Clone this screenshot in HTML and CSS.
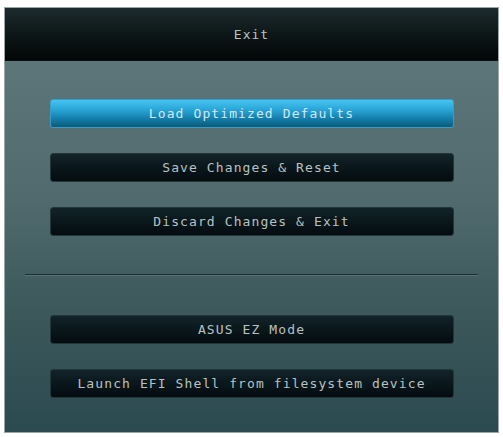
FILE: index.html
```html
<!DOCTYPE html>
<html>
<head>
<meta charset="utf-8">
<link rel="stylesheet" href="styles.css">
</head>
<body>
<div class="panel">
  <div class="header">Exit</div>
  <div class="content">
    <div class="group">
      <div class="btn active">Load Optimized Defaults</div>
      <div class="btn">Save Changes &amp; Reset</div>
      <div class="btn">Discard Changes &amp; Exit</div>
    </div>
    <div class="divider"></div>
    <div class="group">
      <div class="btn">ASUS EZ Mode</div>
      <div class="btn">Launch EFI Shell from filesystem device</div>
    </div>
  </div>
</div>
</body>
</html>
```
FILE: styles.css
```css
html, body {
  margin: 0;
  padding: 0;
  background: #ffffff;
}
body {
  padding: 7px 4px 0 4px;
  font-family: "DejaVu Sans Mono", "Liberation Mono", monospace;
}
.panel {
  width: 495px;
  height: 426px;
  box-sizing: border-box;
  border: 1px solid #9aa6a8;
  background: linear-gradient(180deg, #627a7c 0%, #506a6e 45%, #3a5659 75%, #2b4a50 100%);
  display: flex;
  flex-direction: column;
}
.header {
  height: 52px;
  flex: none;
  background: linear-gradient(180deg, #1c2b2d 0%, #0c1516 55%, #030606 100%);
  color: #b9c2c2;
  font-size: 13px;
  letter-spacing: 1px;
  display: flex;
  align-items: center;
  justify-content: center;
  border-bottom: 1px solid #0a0f10;
}
.content {
  padding: 38px 0 0 0;
  display: flex;
  flex-direction: column;
  align-items: center;
}
.group {
  display: flex;
  flex-direction: column;
  gap: 25px;
  width: 404px;
}
.btn {
  height: 29px;
  box-sizing: border-box;
  border-radius: 3px;
  background: linear-gradient(180deg, #122429 0%, #0a171b 50%, #040c10 100%);
  border: 1px solid #23373b;
  color: #b8c2c4;
  font-size: 13px;
  letter-spacing: 1.1px;
  display: flex;
  align-items: center;
  justify-content: center;
  white-space: nowrap;
}
.btn.active {
  background: linear-gradient(180deg, #44c4f0 0%, #2aa6d8 35%, #1583b2 65%, #0c5a78 100%);
  border-color: #3a9cc4;
  color: #cfe9f5;
}
.divider {
  width: 453px;
  height: 1px;
  background: #1a2d31;
  border-bottom: 1px solid #5b7376;
  margin: 38px 0 39px 0;
}
```
